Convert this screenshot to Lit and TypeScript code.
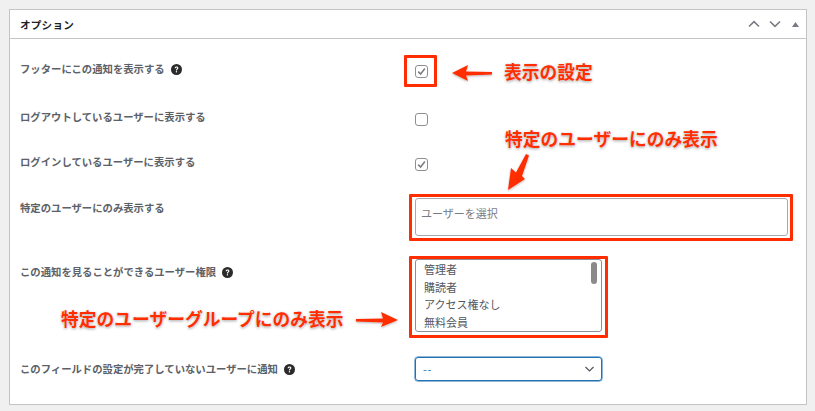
import { LitElement, html, css, svg } from "lit";
import { customElement } from "lit/decorators.js";

const help = html`<svg class="help" width="11" height="11" viewBox="0 0 20 20"><circle cx="10" cy="10" r="10" fill="#2a2a2a"/><path d="M6.6 7.6c0-2 1.5-3.2 3.5-3.2 2 0 3.4 1.1 3.4 2.9 0 1.300-.7 2-1.700 2.700-.8.500-1 .8-1 1.700H8.900c0-1.500.4-2.200 1.400-2.900.7-.5 1-.8 1-1.400 0-.7-.5-1.100-1.200-1.100-.8 0-1.300.5-1.400 1.300z" fill="#fff"/><rect x="8.800" y="13" width="2.200" height="2.300" fill="#fff"/></svg>`;
const check = html`<span class="cb"><svg width="11" height="11" viewBox="0 0 11 11"><path d="M2.200 5.600 4.600 8 8.900 2.600" fill="none" stroke="#7b7f85" stroke-width="1.600"/></svg></span>`;

@customElement("app-root")
export class AppRoot extends LitElement {
  static styles = css`
    :host { display: block; width: 815px; height: 411px; background: #f0f0f1; position: relative; overflow: hidden;
      font-family: "Noto Sans CJK JP", "Liberation Sans", sans-serif; }
    .wrap { padding: 9px 8px 0 9px; }
    .panel { height: 396px; box-sizing: border-box; background: #fff; border: 1px solid #c3c4c7; }
    .head { height: 29px; box-sizing: border-box; border-bottom: 1px solid #c3c4c7; display: flex; align-items: center; justify-content: space-between; padding: 0 7px 0 10px; }
    .title { font-size: 10.6px; font-weight: 700; color: #1d2327; letter-spacing: .2px; }
    .tools { display: flex; align-items: center; gap: 9px; }
    .row { display: grid; grid-template-columns: 395px 1fr; padding: 22px 0 0 10px; box-sizing: border-box; }
    .r1 { height: 48px; }
    .r2 { height: 45px; }
    .r3 { height: 46px; }
    .r4 { height: 64px; }
    .r5 { height: 97px; }
    .lab { font-size: 10.350px; font-weight: 700; color: #5c6167; line-height: 16px; height: 16px; display: flex; align-items: center; gap: 6px; white-space: nowrap; }
    .cb { display: block; width: 11px; height: 11px; border: 1px solid #8c8f94; border-radius: 3px; margin-top: 4px; background: #fff; }
    .cb svg { display: block; }
    .input { width: 373px; height: 38px; box-sizing: border-box; border: 1px solid #a7aaad; border-radius: 3px; margin-top: -2px; padding: 6px 5px; font-size: 11px; color: #787c82; line-height: 16px; }
    .list { width: 187px; height: 73px; box-sizing: border-box; border: 1px solid #8c8f94; border-radius: 3px; margin-top: -5px; padding: 1px 8px 0; position: relative; overflow: hidden; font-size: 11px; color: #50575e; }
    .list div { height: 17.700px; line-height: 17.700px; white-space: nowrap; }
    .thumb { position: absolute; right: 4px; top: 2px; width: 6px; height: 22px; border-radius: 3px; background: #8a8a8a; }
    .select { width: 187px; height: 24px; box-sizing: border-box; border: 1px solid #2271b1; box-shadow: 0 0 0 .5px #2271b1; border-radius: 3px; margin-top: -4px; padding: 0 7px; display: flex; align-items: center; justify-content: space-between; font-size: 11px; color: #2271b1; }
    .select span { letter-spacing: .8px; }
    .anno { position: absolute; inset: 0; pointer-events: none; }
    .anno svg { position: absolute; left: 0; top: 0; }
    .box { position: absolute; box-sizing: border-box; border: 3px solid #ff2d00; border-radius: 1px; }
    .note { position: absolute; font-size: 17.750px; line-height: 20px; font-weight: 700; color: #ff2d00; white-space: nowrap;
      text-shadow: 0 0 1px #fff, 0 1px 3px rgba(0,0,0,.4), 0 0 2px rgba(255,255,255,.9); }
    .b1 { left: 404px; top: 55px; width: 33px; height: 32px; }
    .b2 { left: 409px; top: 194px; width: 384px; height: 47px; }
    .b3 { left: 409px; top: 256px; width: 199px; height: 82px; }
    .n1 { left: 504px; top: 61px; }
    .n2 { left: 505px; top: 128px; }
    .n3 { left: 61px; top: 308px; }
  `;

  render() {
    return html`
      <div class="wrap"><div class="panel">
        <div class="head">
          <span class="title">オプション</span>
          <span class="tools">
            <svg width="12" height="8" viewBox="0 0 12 8"><path d="M1 6.500 6 1.700l5 4.800" fill="none" stroke="#787c82" stroke-width="1.600"/></svg>
            <svg width="12" height="8" viewBox="0 0 12 8"><path d="M1 1.500l5 4.800 5-4.800" fill="none" stroke="#787c82" stroke-width="1.600"/></svg>
            <svg style="margin-left:2px" width="7" height="5" viewBox="0 0 7 5"><path d="M3.500 0 7 5H0z" fill="#787c82"/></svg>
          </span>
        </div>
        <div class="row r1"><div class="lab">フッターにこの通知を表示する ${help}</div><div>${check}</div></div>
        <div class="row r2"><div class="lab">ログアウトしているユーザーに表示する</div><div><span class="cb"></span></div></div>
        <div class="row r3"><div class="lab">ログインしているユーザーに表示する</div><div>${check}</div></div>
        <div class="row r4"><div class="lab">特定のユーザーにのみ表示する</div><div><div class="input">ユーザーを選択</div></div></div>
        <div class="row r5"><div class="lab">この通知を見ることができるユーザー権限 ${help}</div>
          <div><div class="list"><div>管理者</div><div>購読者</div><div>アクセス権なし</div><div>無料会員</div><span class="thumb"></span></div></div></div>
        <div class="row r6"><div class="lab">このフィールドの設定が完了していないユーザーに通知 ${help}</div>
          <div><div class="select"><span>--</span><svg width="9" height="6" viewBox="0 0 9 6"><path d="M.5 1l4 4 4-4" fill="none" stroke="#50575e" stroke-width="1.200"/></svg></div></div></div>
      </div></div>
      <div class="anno">
        <span class="box b1"></span><span class="box b2"></span><span class="box b3"></span>
        <span class="note n1">表示の設定</span>
        <span class="note n2">特定のユーザーにのみ表示</span>
        <span class="note n3">特定のユーザーグループにのみ表示</span>
        <svg width="815" height="411" viewBox="0 0 815 411">
          <defs><filter id="s" x="-30%" y="-30%" width="160%" height="160%"><feDropShadow dx="0" dy="1" stdDeviation="1" flood-color="#000" flood-opacity=".3"/></filter></defs>
          ${svg`<g fill="#ff2d00" filter="url(#s)">
            <path d="M452 73 468 65 466 71.500 492 72 492 74.500 466 75.500 468 81z"/>
            <path d="M508 190 511 168 516 172.500 526 154 529 155.500 522 176 525 179z"/>
            <path d="M398 320 381 312 383 318.500 356 319 356 321.500 383 322.500 381 327z"/>
          </g>`}
        </svg>
      </div>
    `;
  }
}
